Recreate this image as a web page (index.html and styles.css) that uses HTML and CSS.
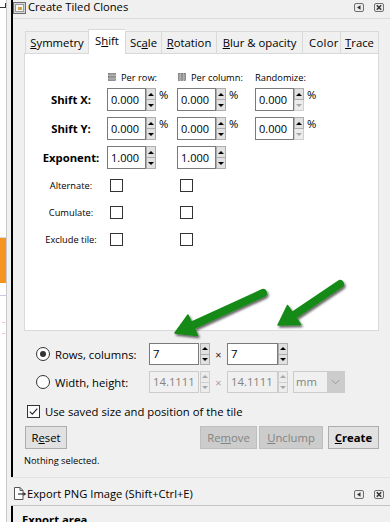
FILE: index.html
```html
<!DOCTYPE html>
<html lang="en">
<head>
<meta charset="utf-8">
<title>Create Tiled Clones</title>
<link rel="stylesheet" href="styles.css">
</head>
<body>
<div class="screen">
  <div class="canvas-edge">
    <span class="hook"></span>
    <span class="orange"></span>
    <span class="blueline"></span>
    <span class="pink p1"></span>
    <span class="pink p2"></span>
  </div>
  <div class="docks">
    <section class="dock dock-clones">
      <header class="dock-head">
        <svg class="head-icon" width="13" height="12" viewBox="0 0 13 12">
          <rect x="0.5" y="0.5" width="12" height="11" fill="#d6d6d6" stroke="#6e6e6e"/>
          <rect x="2.5" y="2.5" width="8" height="7" fill="#f4f4f4" stroke="#9a9a9a"/>
          <rect x="5" y="5" width="4" height="3" fill="#c9a448"/>
        </svg>
        <span class="head-title">Create Tiled Clones</span>
        <span class="head-btns">
          <svg width="10" height="9" viewBox="0 0 10 9"><rect x="0.5" y="0.5" width="9" height="8" rx="1.5" fill="#ececec" stroke="#707070"/><path d="M3 4.5 L6.5 2.2 L6.5 6.8 Z" fill="#333"/></svg>
          <svg width="10" height="9" viewBox="0 0 10 9"><rect x="0.5" y="0.5" width="9" height="8" rx="1.5" fill="#ececec" stroke="#707070"/><path d="M2.8 2.3 L7.2 6.7 M7.2 2.3 L2.8 6.7" stroke="#333" stroke-width="1.5"/></svg>
        </span>
      </header>
      <div class="dock-body">
        <div class="notebook">
          <div class="tabs">
            <div class="tab t-sym"><u>S</u>ymmetry</div>
            <div class="tab t-shift active">S<u>h</u>ift</div>
            <div class="tab t-scale">Sc<u>a</u>le</div>
            <div class="tab t-rot"><u>R</u>otation</div>
            <div class="tab t-blur"><u>B</u>lur &amp; opacity</div>
            <div class="tab t-color">Color</div>
            <div class="tab t-trace last"><u>T</u>race</div>
          </div>
          <div class="page">
            <div class="grid">
              <div></div>
              <div class="colhead">
                <svg width="8" height="8" viewBox="0 0 8 8"><rect x="0.5" y="0.5" width="7" height="1.6" fill="#b5b5b5" stroke="#6f6f6f" stroke-width="0.7"/><rect x="0.5" y="3.2" width="7" height="1.6" fill="#b5b5b5" stroke="#6f6f6f" stroke-width="0.7"/><rect x="0.5" y="5.9" width="7" height="1.6" fill="#b5b5b5" stroke="#6f6f6f" stroke-width="0.7"/></svg>
                <span>Per row:</span>
              </div>
              <div class="colhead">
                <svg width="8" height="8" viewBox="0 0 8 8"><rect x="0.5" y="0.5" width="1.6" height="7" fill="#b5b5b5" stroke="#6f6f6f" stroke-width="0.7"/><rect x="3.2" y="0.5" width="1.6" height="7" fill="#b5b5b5" stroke="#6f6f6f" stroke-width="0.7"/><rect x="5.9" y="0.5" width="1.6" height="7" fill="#b5b5b5" stroke="#6f6f6f" stroke-width="0.7"/></svg>
                <span>Per column:</span>
              </div>
              <div class="colhead plain"><span>Randomize:</span></div>

              <div class="lbl-bold">Shift X:</div>
              <div class="spin"><div class="entry">0.000</div><div class="spinbtns"><span class="sb up"></span><span class="sb down"></span></div><span class="pct">%</span></div>
              <div class="spin"><div class="entry">0.000</div><div class="spinbtns"><span class="sb up"></span><span class="sb down"></span></div><span class="pct">%</span></div>
              <div class="spin"><div class="entry">0.000</div><div class="spinbtns"><span class="sb up"></span><span class="sb down off"></span></div><span class="pct">%</span></div>

              <div class="lbl-bold">Shift Y:</div>
              <div class="spin"><div class="entry">0.000</div><div class="spinbtns"><span class="sb up"></span><span class="sb down"></span></div><span class="pct">%</span></div>
              <div class="spin"><div class="entry">0.000</div><div class="spinbtns"><span class="sb up"></span><span class="sb down"></span></div><span class="pct">%</span></div>
              <div class="spin"><div class="entry">0.000</div><div class="spinbtns"><span class="sb up"></span><span class="sb down off"></span></div><span class="pct">%</span></div>

              <div class="lbl-bold">Exponent:</div>
              <div class="spin"><div class="entry">1.000</div><div class="spinbtns"><span class="sb up"></span><span class="sb down"></span></div></div>
              <div class="spin"><div class="entry">1.000</div><div class="spinbtns"><span class="sb up"></span><span class="sb down"></span></div></div>
              <div></div>

              <div class="lbl-small">Alternate:</div>
              <div><span class="cb"></span></div>
              <div><span class="cb"></span></div>
              <div></div>

              <div class="lbl-small">Cumulate:</div>
              <div><span class="cb"></span></div>
              <div><span class="cb"></span></div>
              <div></div>

              <div class="lbl-small">Exclude tile:</div>
              <div><span class="cb"></span></div>
              <div><span class="cb"></span></div>
              <div></div>
            </div>
          </div>
        </div>

        <div class="size-rows">
          <div class="srow">
            <div class="radio-lbl"><span class="radio on"></span><span>Rows, columns:</span></div>
            <div class="entry wide">7</div>
            <div class="spinbtns s22 gap1"><span class="sb up"></span><span class="sb down"></span></div>
            <span class="times">×</span>
            <div class="entry wide2">7</div>
            <div class="spinbtns s22"><span class="sb up"></span><span class="sb down"></span></div>
          </div>
          <div class="srow">
            <div class="radio-lbl"><span class="radio"></span><span>Width, height:</span></div>
            <div class="entry wide off">14.1111</div>
            <div class="spinbtns s22 gap1"><span class="sb up off"></span><span class="sb down off"></span></div>
            <span class="times off">×</span>
            <div class="entry wide2 off">14.1111</div>
            <div class="spinbtns s22"><span class="sb up off"></span><span class="sb down off"></span></div>
            <div class="combo"><span class="val">mm</span><span class="drop"><svg width="9" height="6" viewBox="0 0 9 6"><path d="M0.5 0.8 L4.5 4.8 L8.5 0.8" fill="none" stroke="#9a9a9a" stroke-width="1"/></svg></span></div>
          </div>
        </div>

        <div class="chkrow">
          <span class="cb checked"><svg width="11" height="11" viewBox="0 0 11 11"><path d="M1.8 5.6 L4.3 8.1 L9.3 2.6" fill="none" stroke="#222" stroke-width="1.1"/></svg></span>
          <span>Use saved size and position of the tile</span>
        </div>

        <div class="btnrow">
          <button class="btn b-reset">R<u>e</u>set</button>
          <span class="spacer"></span>
          <button class="btn b-remove" disabled>Re<u>m</u>ove</button>
          <button class="btn b-unclump" disabled><u>U</u>nclump</button>
          <button class="btn b-create"><u>C</u>reate</button>
        </div>

        <div class="status">Nothing selected.</div>
      </div>
    </section>

    <section class="dock dock-export">
      <header class="export-head">
        <svg class="head-icon exp-icon" width="14" height="13" viewBox="0 0 14 13">
          <path d="M1.5 0.5 H7 L10 3.5 V12.5 H1.5 Z" fill="#fff" stroke="#555"/>
          <path d="M7 0.5 V3.5 H10" fill="none" stroke="#555"/>
          <path d="M5 7 H12.5" stroke="#333" stroke-width="1.2"/>
          <path d="M10.5 5 L13 7 L10.5 9 Z" fill="#333"/>
        </svg>
        <span class="head-title">Export PNG Image (Shift+Ctrl+E)</span>
        <span class="head-btns">
          <svg width="10" height="9" viewBox="0 0 10 9"><rect x="0.5" y="0.5" width="9" height="8" rx="1.5" fill="#ececec" stroke="#707070"/><path d="M3 4.5 L6.5 2.2 L6.5 6.8 Z" fill="#333"/></svg>
          <svg width="10" height="9" viewBox="0 0 10 9"><rect x="0.5" y="0.5" width="9" height="8" rx="1.5" fill="#ececec" stroke="#707070"/><path d="M2.8 2.3 L7.2 6.7 M7.2 2.3 L2.8 6.7" stroke="#333" stroke-width="1.5"/></svg>
        </span>
      </header>
      <div class="export-body">
        <div class="export-area">Export area</div>
      </div>
    </section>
  </div>

  <svg class="arrows" width="390" height="522" viewBox="0 0 390 522">
    <defs>
      <filter id="shadow" x="-20%" y="-20%" width="140%" height="140%">
        <feDropShadow dx="1.5" dy="2" stdDeviation="1.3" flood-color="#000" flood-opacity="0.6"/>
      </filter>
    </defs>
    <g filter="url(#shadow)" fill="#138a13" stroke="#138a13" stroke-linejoin="round">
      <path d="M263 293 L190 326.5" stroke-width="8" stroke-linecap="round" fill="none"/>
      <path d="M175 333 L197.5 335.5 L188 315 Z" stroke-width="1.5"/>
      <path d="M340 284 L291 317" stroke-width="8" stroke-linecap="round" fill="none"/>
      <path d="M278 325 L300.5 324.5 L287.5 305.5 Z" stroke-width="1.5"/>
    </g>
  </svg>
</div>
</body>
</html>
```

FILE: styles.css
```css
* { box-sizing: border-box; }

html, body {
  margin: 0;
  padding: 0;
}

body {
  width: 390px;
  height: 522px;
  overflow: hidden;
  background: #f0f0f0;
  font-family: "Open Sans", "Noto Sans", sans-serif;
  font-size: 11.3px;
  color: #000;
}

u { text-decoration: underline; text-underline-offset: 1px; }

.screen {
  position: relative;
  display: flex;
  width: 390px;
  height: 522px;
  overflow: hidden;
}

/* strip of the drawing canvas on the left */
.canvas-edge {
  flex: none;
  width: 7px;
  margin-right: 4px;
  background: #fff;
  border-right: 1px solid #c9c9c9;
  display: flex;
  flex-direction: column;
}
.hook {
  width: 6px;
  height: 5px;
  margin-top: 3px;
  border-right: 1px solid #333;
  border-bottom: 1px solid #333;
}
.orange {
  height: 46px;
  margin-top: 229px;
  background: #f7941e;
  border-top: 1px solid #d9d9d9;
}
.blueline {
  height: 1px;
  margin-top: 12px;
  background: #c7c7ef;
}
.pink {
  width: 3px;
  height: 1px;
  margin-left: 2px;
  background: #f3c4c4;
}
.p1 { margin-top: 26px; }
.p2 { margin-top: 10px; }

.docks {
  flex: 1;
  min-width: 0;
  display: flex;
  flex-direction: column;
}

.dock-clones {
  flex: none;
  height: 477px;
  border-left: 2px solid #000;
  display: flex;
  flex-direction: column;
}

.dock-head {
  flex: none;
  height: 19px;
  display: flex;
  align-items: flex-start;
  border-bottom: 1px solid #dadada;
}
.head-icon { flex: none; margin-top: 2px; margin-right: 2px; }
.head-title {
  line-height: 14px;
  font-size: 11.2px;
  white-space: nowrap;
}
.head-btns {
  margin-left: auto;
  margin-right: 6px;
  margin-top: 3px;
  display: flex;
  gap: 10px;
}
.head-btns svg { display: block; }

.dock-body {
  padding: 10px 11px 0 11px;
}

/* notebook */
.tabs {
  display: flex;
  align-items: flex-end;
  height: 24px;
  padding-left: 1px;
}
.tab {
  height: 22px;
  border: 1px solid #d9d9d9;
  border-bottom: none;
  border-right: none;
  background: #f0f0f0;
  text-align: center;
  line-height: 21px;
  white-space: nowrap;
  overflow: hidden;
}
.tab.active {
  height: 25px;
  margin-bottom: -1px;
  background: #fff;
  line-height: 22px;
  position: relative;
  z-index: 1;
}
.tab.last { border-right: 1px solid #d9d9d9; }
.t-sym { width: 63px; }
.t-shift { width: 37px; }
.t-scale { width: 36px; }
.t-rot { width: 55px; }
.t-blur { width: 86px; }
.t-color { width: 38px; text-align: left; padding-left: 6px; letter-spacing: 0.3px; }
.t-trace { width: 39px; }

.page {
  height: 278px;
  background: #fff;
  border: 1px solid #d9d9d9;
  padding: 15px 0 0 10px;
}

.grid {
  display: grid;
  grid-template-columns: 72px 70px 78px 1fr;
  grid-template-rows: 19px 29px 29px 29px 27px 27px 27px;
}

.colhead {
  display: flex;
  align-items: center;
  gap: 5px;
  height: 16px;
  padding-left: 1px;
  font-size: 9.3px;
  white-space: nowrap;
}
.colhead.plain { padding-left: 0; }
.colhead svg { display: block; flex: none; }

.lbl-bold {
  font-weight: bold;
  text-align: center;
  line-height: 23px;
  white-space: nowrap;
}
.lbl-small {
  font-size: 9.3px;
  text-align: center;
  line-height: 13px;
  margin-top: 4px;
  white-space: nowrap;
}

.spin {
  display: flex;
  align-items: flex-start;
}
.entry {
  flex: none;
  width: 39px;
  height: 23px;
  border: 1px solid #7a7a7a;
  background: #fff;
  padding-left: 3px;
  font-size: 11px;
  line-height: 21px;
  white-space: nowrap;
  overflow: hidden;
}
.spinbtns {
  flex: none;
  width: 10px;
  height: 23px;
  display: flex;
  flex-direction: column;
}
.sb {
  flex: 1;
  display: flex;
  align-items: center;
  justify-content: center;
  background: #e1e1e1;
  border: 1px solid #adadad;
}
.sb.down { border-top: none; }
.sb::before {
  content: "";
  width: 0;
  height: 0;
  border-left: 3px solid transparent;
  border-right: 3px solid transparent;
}
.sb.up::before { border-bottom: 3px solid #000; }
.sb.down::before { border-top: 3px solid #000; }
.sb.off { background: #ececec; border-color: #cfcfcf; }
.sb.up.off::before { border-bottom-color: #a6a6a6; }
.sb.down.off::before { border-top-color: #a6a6a6; }

.pct {
  margin-left: 3px;
  line-height: 14px;
}

.cb {
  display: block;
  width: 13px;
  height: 13px;
  margin: 4px 0 0 3px;
  border: 1px solid #333;
  background: #fff;
}

/* rows / columns area */
.size-rows {
  margin-top: 12px;
  padding-left: 12px;
  display: flex;
  flex-direction: column;
  gap: 6px;
}
.srow {
  display: flex;
  align-items: center;
  height: 22px;
}
.radio-lbl {
  flex: none;
  width: 113px;
  display: flex;
  align-items: center;
  gap: 5px;
  white-space: nowrap;
}
.radio {
  flex: none;
  width: 14px;
  height: 14px;
  border-radius: 50%;
  border: 1px solid #333;
  background: #fff;
  display: flex;
  align-items: center;
  justify-content: center;
}
.radio.on::after {
  content: "";
  width: 6px;
  height: 6px;
  border-radius: 50%;
  background: #333;
}
.entry.wide { width: 50px; height: 22px; line-height: 20px; font-size: 11.3px; }
.entry.wide2 { width: 51px; height: 22px; line-height: 20px; font-size: 11.3px; }
.entry.off {
  background: #f0f0f0;
  border-color: #cccccc;
  color: #838383;
}
.spinbtns.s22 { height: 22px; }
.spinbtns.gap1 { margin-left: 1px; }
.times {
  flex: none;
  width: 17px;
  text-align: center;
  color: #4a1010;
  font-size: 11px;
}
.times.off { color: #b59a9a; }

.combo {
  flex: none;
  margin-left: 5px;
  width: 52px;
  height: 22px;
  display: flex;
  border: 1px solid #cccccc;
  background: #f0f0f0;
  color: #838383;
}
.combo .val {
  flex: 1;
  padding-left: 2px;
  line-height: 20px;
}
.combo .drop {
  width: 17px;
  display: flex;
  align-items: center;
  justify-content: center;
  background: #cccccc;
}
.combo .drop svg { display: block; }

.chkrow {
  display: flex;
  align-items: center;
  gap: 5px;
  height: 13px;
  margin-top: 12px;
  padding-left: 3px;
  white-space: nowrap;
}
.chkrow .cb {
  margin: 0;
  display: flex;
  align-items: center;
  justify-content: center;
}
.chkrow .cb svg { display: block; }

.btnrow {
  display: flex;
  height: 23px;
  margin-top: 8px;
}
.spacer { flex: 1; }
.btn {
  flex: none;
  height: 23px;
  padding: 0;
  border: 1px solid #adadad;
  background: #e1e1e1;
  font-family: inherit;
  font-size: 11.3px;
  color: #000;
  line-height: 21px;
  text-align: center;
}
.btn:disabled {
  background: #cccccc;
  border-color: #bfbfbf;
  color: #838383;
}
.b-reset { width: 42px; margin-left: 1px; }
.b-remove { width: 57px; margin-right: 2px; }
.b-unclump { width: 64px; margin-right: 5px; }
.b-create { width: 51px; font-weight: bold; }

.status {
  margin-top: 6px;
  font-size: 9.3px;
  line-height: 12px;
}

/* export dock */
.dock-export {
  flex: 1;
  display: flex;
  flex-direction: column;
}
.export-head {
  flex: none;
  height: 29px;
  display: flex;
  align-items: flex-start;
  padding-top: 8px;
  padding-left: 2px;
  border-top: 1px solid #e2e2e2;
  border-bottom: 1px solid #c4c4c4;
}
.export-head .head-title { line-height: 16px; }
.exp-icon { margin-top: 1px; margin-right: 0; }
.export-head .head-btns { margin-top: 4px; }
.export-body {
  flex: 1;
  border-left: 2px solid #000;
  padding: 6px 0 0 9px;
}
.export-area {
  font-weight: bold;
  line-height: 16px;
}

.arrows {
  position: absolute;
  left: 0;
  top: 0;
  pointer-events: none;
}
```
